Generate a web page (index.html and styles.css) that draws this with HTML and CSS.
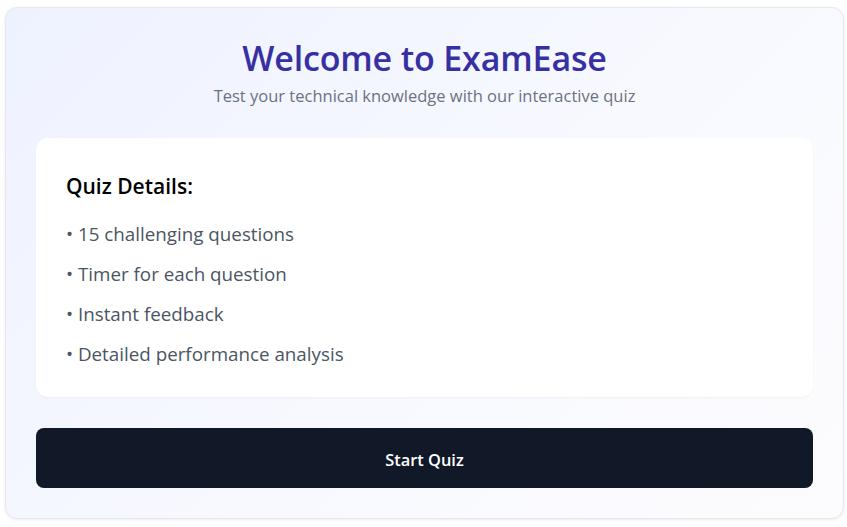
FILE: index.html
```html
<!DOCTYPE html>
<html lang="en">
<head>
<meta charset="utf-8">
<title>ExamEase</title>
<link rel="stylesheet" href="styles.css">
</head>
<body>
<main class="card">
  <header class="intro">
    <h1 class="title">Welcome to ExamEase</h1>
    <p class="subtitle">Test your technical knowledge with our interactive quiz</p>
  </header>
  <section class="details">
    <h2 class="details-title">Quiz Details:</h2>
    <ul class="details-list">
      <li>• 15 challenging questions</li>
      <li>• Timer for each question</li>
      <li>• Instant feedback</li>
      <li>• Detailed performance analysis</li>
    </ul>
  </section>
  <button class="start" type="button">Start Quiz</button>
</main>
</body>
</html>
```
FILE: styles.css
```css
* { box-sizing: border-box; }
html, body { background: #ffffff; }
body {
  margin: 0;
  padding: 7px 3px 8px 5px;
  font-family: "Open Sans", "Noto Sans", "Liberation Sans", sans-serif;
}
.card {
  display: flex;
  flex-direction: column;
  border: 1px solid #e5e7eb;
  border-radius: 12px;
  padding: 30px 30px 30px 30px;
  background: linear-gradient(135deg, #eef2ff 0%, #f8f9ff 55%, #fcfcfe 100%);
  box-shadow: 0 1px 3px rgba(0,0,0,0.08);
}
.intro { text-align: center; }
.title {
  margin: 0;
  font-size: 34px;
  line-height: 40px;
  font-weight: 600;
  color: #3730a3;
  letter-spacing: -0.15px;
}
.subtitle {
  margin: 6px 0 0;
  font-size: 16.5px;
  line-height: 24px;
  color: #6b7280;
}
.details {
  margin-top: 30px;
  background: #ffffff;
  border-radius: 12px;
  padding: 30px 30px 29px;
  box-shadow: 0 1px 2px rgba(0,0,0,0.04);
}
.details-title {
  margin: 0;
  font-size: 21px;
  line-height: 36px;
  font-weight: 600;
  color: #000000;
}
.details-list {
  list-style: none;
  margin: 16px 0 0;
  padding: 0;
  display: flex;
  flex-direction: column;
  gap: 12px;
}
.details-list li {
  font-size: 18.8px;
  line-height: 28px;
  color: #4b5563;
}
.start {
  margin-top: 31px;
  height: 60px;
  padding-top: 3px;
  border: 0;
  border-radius: 8px;
  background: #111827;
  color: #ffffff;
  font-family: inherit;
  font-size: 16.4px;
  font-weight: 600;
  cursor: pointer;
}
```
